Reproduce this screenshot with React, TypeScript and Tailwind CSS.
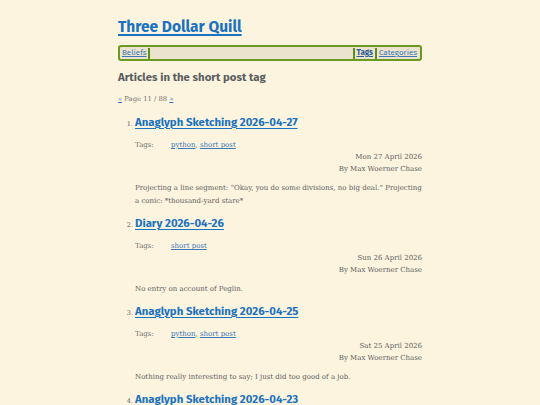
import React from "react";

const heading = { fontFamily: '"Fira Sans", "Open Sans", "Noto Sans", sans-serif' };
const body = { fontFamily: '"Roboto Slab", "DejaVu Serif", serif' };

type Post = { title: string; tags: string[]; date: string; text: string[] };

const posts: Post[] = [
  {
    title: "Anaglyph Sketching 2026-04-27",
    tags: ["python", "short post"],
    date: "Mon 27 April 2026",
    text: [
      "Projecting a line segment: \u201COkay, you do some divisions, no big deal.\u201D Projecting",
      "a conic: *thousand-yard stare*",
    ],
  },
  {
    title: "Diary 2026-04-26",
    tags: ["short post"],
    date: "Sun 26 April 2026",
    text: ["No entry on account of Peglin."],
  },
  {
    title: "Anaglyph Sketching 2026-04-25",
    tags: ["python", "short post"],
    date: "Sat 25 April 2026",
    text: ["Nothing really interesting to say; I just did too good of a job."],
  },
  {
    title: "Anaglyph Sketching 2026-04-23",
    tags: ["python", "short post"],
    date: "Thu 23 April 2026",
    text: ["..."],
  },
];

export default function App() {
  return (
    <div className="w-[540px] h-[405px] overflow-hidden bg-[#fcf4de]">
      <div className="w-[304px] ml-[118px] flex flex-col">
        <a
          href="#"
          style={heading}
          className="mt-[16px] h-[22px] text-[15.5px] leading-[22px] font-bold text-[#1b72c0] underline decoration-[1.5px] underline-offset-2 self-start"
        >
          Three Dollar Quill
        </a>
        <div
          style={heading}
          className="mt-[7px] h-[16px] border-2 border-[#6a9a1f] rounded-[3px] bg-[#ebe3cd] flex items-center text-[8px] leading-[10px] px-[1px]"
        >
          <a href="#" className="text-[#3a78b8] underline px-[1px]">Beliefs</a>
          <span className="w-[2px] h-[11px] bg-[#5e8f1a]" />
          <span className="flex-1" />
          <span className="w-[2px] h-[11px] bg-[#5e8f1a]" />
          <a href="#" className="text-[#2b5f96] font-bold underline px-[2px]">Tags</a>
          <span className="w-[2px] h-[11px] bg-[#5e8f1a]" />
          <a href="#" className="text-[#3a78b8] underline px-[2px]">Categories</a>
        </div>
        <h1
          style={heading}
          className="mt-[7px] text-[11.4px] leading-[18px] font-bold text-[#5a5e60]"
        >
          Articles in the short post tag
        </h1>
        <div style={body} className="mt-[8px] text-[6.8px] leading-[10px] text-[#707070]">
          <a href="#" className="text-[#3a78b8] underline">&laquo;</a> Page 11 / 88{" "}
          <a href="#" className="text-[#3a78b8] underline">&raquo;</a>
        </div>
        <ol className="mt-[10px] flex flex-col gap-[7px]">
          {posts.map((p, i) => (
            <li key={i} className="flex flex-col">
              <div className="flex items-baseline">
                <span style={body} className="w-[17px] text-right pr-[2px] text-[6.5px] text-[#606060]">
                  {i + 1}.
                </span>
                <a
                  href="#"
                  style={heading}
                  className="text-[11.4px] leading-[16px] font-bold text-[#1b72c0] underline decoration-[1px] underline-offset-2"
                >
                  {p.title}
                </a>
              </div>
              <div className="pl-[17px] flex flex-col" style={body}>
                <div className="mt-[9px] flex text-[7px] leading-[12px] text-[#707070]">
                  <span className="w-[36px]">Tags:</span>
                  <span>
                    {p.tags.map((t, j) => (
                      <React.Fragment key={t}>
                        {j > 0 && ", "}
                        <a href="#" className="text-[#3a78b8] underline">{t}</a>
                      </React.Fragment>
                    ))}
                  </span>
                </div>
                <div className="text-right text-[7px] leading-[12px] text-[#606060]">{p.date}</div>
                <div className="text-right text-[7px] leading-[12px] text-[#606060]">By Max Woerner Chase</div>
                <div className="mt-[7px] text-[7px] leading-[13px] text-[#606060]">
                  {p.text.map((l, k) => (
                    <div key={k} className="whitespace-nowrap">{l}</div>
                  ))}
                </div>
              </div>
            </li>
          ))}
        </ol>
      </div>
    </div>
  );
}
